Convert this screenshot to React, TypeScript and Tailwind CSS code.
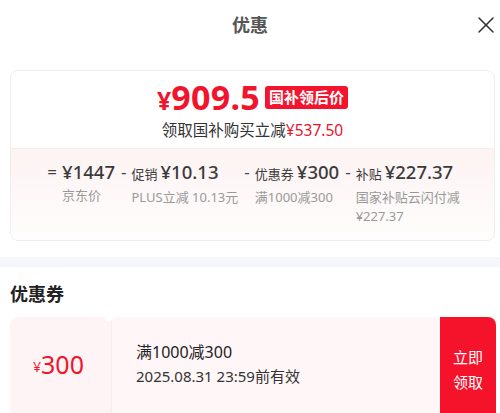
import React from 'react';
import { X } from 'lucide-react';

const font = { fontFamily: '"Noto Sans", "Noto Sans CJK SC", sans-serif' };

type Part = { op: string; label?: string; value: string; sub: string };

const parts: Part[] = [
  { op: '=', value: '¥1447', sub: '京东价' },
  { op: '-', label: '促销', value: '¥10.13', sub: 'PLUS立减 10.13元' },
  { op: '-', label: '优惠券', value: '¥300', sub: '满1000减300' },
  { op: '-', label: '补贴', value: '¥227.37', sub: '国家补贴云闪付减¥227.37' },
];

export default function App() {
  return (
    <div className="w-[500px] h-[413px] overflow-hidden bg-white" style={font}>
      {/* header */}
      <div className="relative h-[50px] flex items-center justify-center">
        <span className="text-[18px] font-bold text-[#555] leading-none">优惠</span>
        <X className="absolute left-[472px] top-[11px] w-[28px] h-[28px] text-[#333]" strokeWidth={1.3} />
      </div>

      {/* summary card */}
      <div className="mx-[10px] mt-[20px] mr-[5px] rounded-lg border border-[#eeeeee] overflow-hidden">
        <div className="h-[77px] flex flex-col items-center pt-[9px]">
          <div className="flex items-center gap-[5px] text-[#f0142d] font-bold leading-none">
            <span className="flex items-baseline">
              <span className="text-[25px]">¥</span>
              <span className="text-[34px] tracking-[0.3px]">909.5</span>
            </span>
            <span className="bg-[#f5142d] text-white text-[15px] font-bold rounded-[3px] px-[4px] py-[4px] leading-none">
              国补领后价
            </span>
          </div>
          <div className="mt-[9px] text-[15.5px] leading-none text-[#333]">
            领取国补购买立减<span className="text-[#e8142c]">¥537.50</span>
          </div>
        </div>
        <div className="border-t border-[#f7eded] bg-gradient-to-b from-[#fdf3f3] to-[#fffdfd] h-[92px] pt-[12px] flex justify-center">
          <div className="flex items-start">
            {parts.map((p, i) => (
              <div key={i} className="flex items-start">
                <span className="text-[17px] text-[#444] leading-[22px] px-[5px]">{p.op}</span>
                <div className={`flex flex-col mr-[1px] ${i === 3 ? 'w-[106px]' : ''}`}>
                  <div className="flex items-baseline text-[#3a3a3a] leading-[22px] whitespace-nowrap">
                    {p.label && <span className="text-[13px] mr-[3px]">{p.label}</span>}
                    <span className="text-[18.5px] font-medium">{p.value}</span>
                  </div>
                  <div className="mt-[3px] text-[13px] leading-[19px] text-[#999]">{p.sub}</div>
                </div>
              </div>
            ))}
          </div>
        </div>
      </div>

      <div className="mt-[16px] h-[10px] bg-[#f5f6fa]" />

      <div className="px-[10px] pt-[18px] text-[18px] font-bold text-[#222] leading-none">优惠券</div>

      {/* coupon */}
      <div className="mt-[14px] mx-[10px] mr-[4px] flex h-[110px]">
        <div className="relative w-[97px] bg-[#fff4f5] rounded-l-lg flex items-center justify-center pb-[16px] text-[#f0142d] leading-none">
          <span className="text-[14px] mt-[6px]">¥</span>
          <span className="text-[25px]">300</span>
        </div>
        <div className="relative w-[4px] bg-[#fff4f5]">
          <div className="absolute -top-[4px] left-[-2px] w-[8px] h-[8px] rounded-full bg-white" />
        </div>
        <div className="flex-1 bg-[#fff6f7] border-l border-[#fbeaec] flex flex-col justify-center pl-[24px] pb-[16px]">
          <div className="text-[16px] text-[#222] leading-none">满1000减300</div>
          <div className="mt-[9px] text-[15px] text-[#333] leading-none">2025.08.31 23:59前有效</div>
        </div>
        <div className="w-[56px] bg-[#f5132b] rounded-tr-lg flex items-center justify-center pb-[4px]">
          <span className="text-white text-[15px] leading-[25px] text-center">立即<br />领取</span>
        </div>
      </div>
    </div>
  );
}
